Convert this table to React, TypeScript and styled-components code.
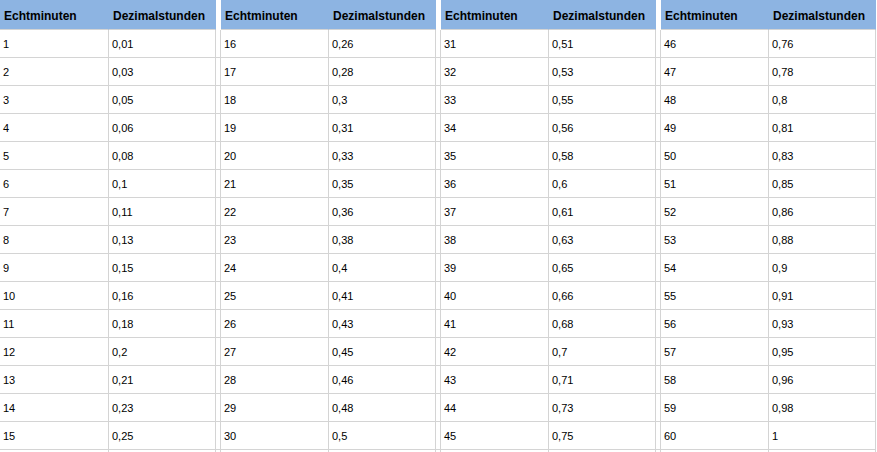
import React from "react";
import styled, { createGlobalStyle } from "styled-components";

const Global = createGlobalStyle`
  html, body { margin: 0; padding: 0; background: #fff; }
  body { font-family: "Liberation Sans", Arial, sans-serif; overflow: hidden; }
`;

const GRID = "#d4d4d4";
const HEAD = "#8db4e2";

const Sheet = styled.div`
  display: grid;
  grid-template-columns: 109px 107px 5px 108px 107px 5px 108px 107px 5px 108px 107px;
  grid-auto-rows: 28px;
  grid-template-rows: 30px;
  width: 877px;
  height: 452px;
  overflow: hidden;
`;

const HeaderCell = styled.div<{ $last?: boolean }>`
  box-sizing: border-box;
  background: ${HEAD};
  border-bottom: 1px solid ${GRID};
  border-right: 1px solid ${HEAD};
  display: flex;
  align-items: center;
  padding: 2px 0 0 4px;
  font-size: 12px;
  font-weight: bold;
  color: #000;
  white-space: nowrap;
`;

const Cell = styled.div`
  box-sizing: border-box;
  border-bottom: 1px solid ${GRID};
  border-right: 1px solid ${GRID};
  display: flex;
  align-items: center;
  padding: 1px 0 0 3px;
  font-size: 11px;
  color: #000;
  white-space: nowrap;
`;

const GapCell = styled.div<{ $head?: boolean }>`
  box-sizing: border-box;
  border-right: 1px solid ${(p) => (p.$head ? "#fff" : GRID)};
  border-bottom: 1px solid ${(p) => (p.$head ? "#fff" : GRID)};
`;

const dec = (m: number) => {
  const v = Math.floor((m * 100) / 60 + 1e-9) / 100;
  return String(v).replace(".", ",");
};

export default function App() {
  const cells: React.ReactNode[] = [];
  for (let t = 0; t < 4; t++) {
    cells.push(<HeaderCell key={`h${t}a`}>Echtminuten</HeaderCell>);
    cells.push(<HeaderCell key={`h${t}b`}>Dezimalstunden</HeaderCell>);
    if (t < 3) cells.push(<GapCell key={`hg${t}`} $head />);
  }
  for (let r = 0; r < 16; r++) {
    for (let t = 0; t < 4; t++) {
      const m = t * 15 + r + 1;
      const has = r < 15;
      cells.push(<Cell key={`r${r}t${t}a`}>{has ? m : ""}</Cell>);
      cells.push(<Cell key={`r${r}t${t}b`}>{has ? dec(m) : ""}</Cell>);
      if (t < 3) cells.push(<GapCell key={`r${r}g${t}`} />);
    }
  }
  return (
    <>
      <Global />
      <Sheet>{cells}</Sheet>
    </>
  );
}
